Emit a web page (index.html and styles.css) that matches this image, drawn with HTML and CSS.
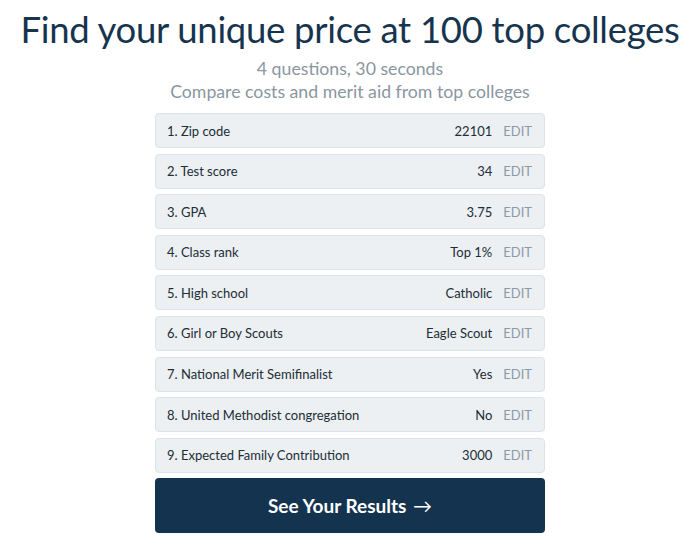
FILE: index.html
```html
<!DOCTYPE html>
<html>
<head>
<meta charset="utf-8">
<link rel="stylesheet" href="styles.css">
</head>
<body>
<div class="page">
  <h1 class="title">Find your unique price at 100 top colleges</h1>
  <p class="sub">4 questions, 30 seconds</p>
  <p class="sub">Compare costs and merit aid from top colleges</p>
  <div class="list">
    <div class="row"><span class="label">1. Zip code</span><span class="value">22101</span><span class="edit">EDIT</span></div>
    <div class="row"><span class="label">2. Test score</span><span class="value">34</span><span class="edit">EDIT</span></div>
    <div class="row"><span class="label">3. GPA</span><span class="value">3.75</span><span class="edit">EDIT</span></div>
    <div class="row"><span class="label">4. Class rank</span><span class="value">Top 1%</span><span class="edit">EDIT</span></div>
    <div class="row"><span class="label">5. High school</span><span class="value">Catholic</span><span class="edit">EDIT</span></div>
    <div class="row"><span class="label">6. Girl or Boy Scouts</span><span class="value">Eagle Scout</span><span class="edit">EDIT</span></div>
    <div class="row"><span class="label">7. National Merit Semifinalist</span><span class="value">Yes</span><span class="edit">EDIT</span></div>
    <div class="row"><span class="label">8. United Methodist congregation</span><span class="value">No</span><span class="edit">EDIT</span></div>
    <div class="row"><span class="label">9. Expected Family Contribution</span><span class="value">3000</span><span class="edit">EDIT</span></div>
    <button class="cta">See Your Results <span class="arrow">&rarr;</span></button>
  </div>
</div>
</body>
</html>
```
FILE: styles.css
```css
html, body {
  margin: 0;
  padding: 0;
  background: #ffffff;
  overflow: hidden;
}
.page {
  padding-left: 8px;
  font-family: Lato, "Liberation Sans", sans-serif;
  display: flex;
  flex-direction: column;
  align-items: center;
}
.title {
  margin: 7px 0 0;
  font-size: 36.5px;
  line-height: 44px;
  font-weight: 400;
  color: #17344f;
  letter-spacing: -0.3px;
  white-space: nowrap;
}
.sub {
  margin: 0;
  font-size: 17.7px;
  line-height: 23px;
  color: #8a96a1;
}
.sub:first-of-type {
  margin-top: 6px;
}
.list {
  margin-top: 10px;
  width: 390px;
  display: flex;
  flex-direction: column;
  gap: 5.6px;
}
.row {
  height: 33px;
  display: flex;
  align-items: center;
  background: #ecf0f2;
  border: 1px solid #dde3e7;
  border-radius: 4px;
  padding: 0 12px 0 11px;
  font-size: 13px;
  color: #222d36;
}
.label {
  flex: 1;
}
.value {
  margin-right: 11px;
}
.edit {
  color: #8d9aa6;
}
.cta {
  margin-top: 0;
  height: 55px;
  border: none;
  border-radius: 4px;
  background: #14334f;
  color: #ffffff;
  font-family: Lato, "Liberation Sans", sans-serif;
  font-size: 19px;
  font-weight: 700;
  cursor: pointer;
}
.arrow {
  margin-left: 2px;
  font-weight: 400;
}
```
